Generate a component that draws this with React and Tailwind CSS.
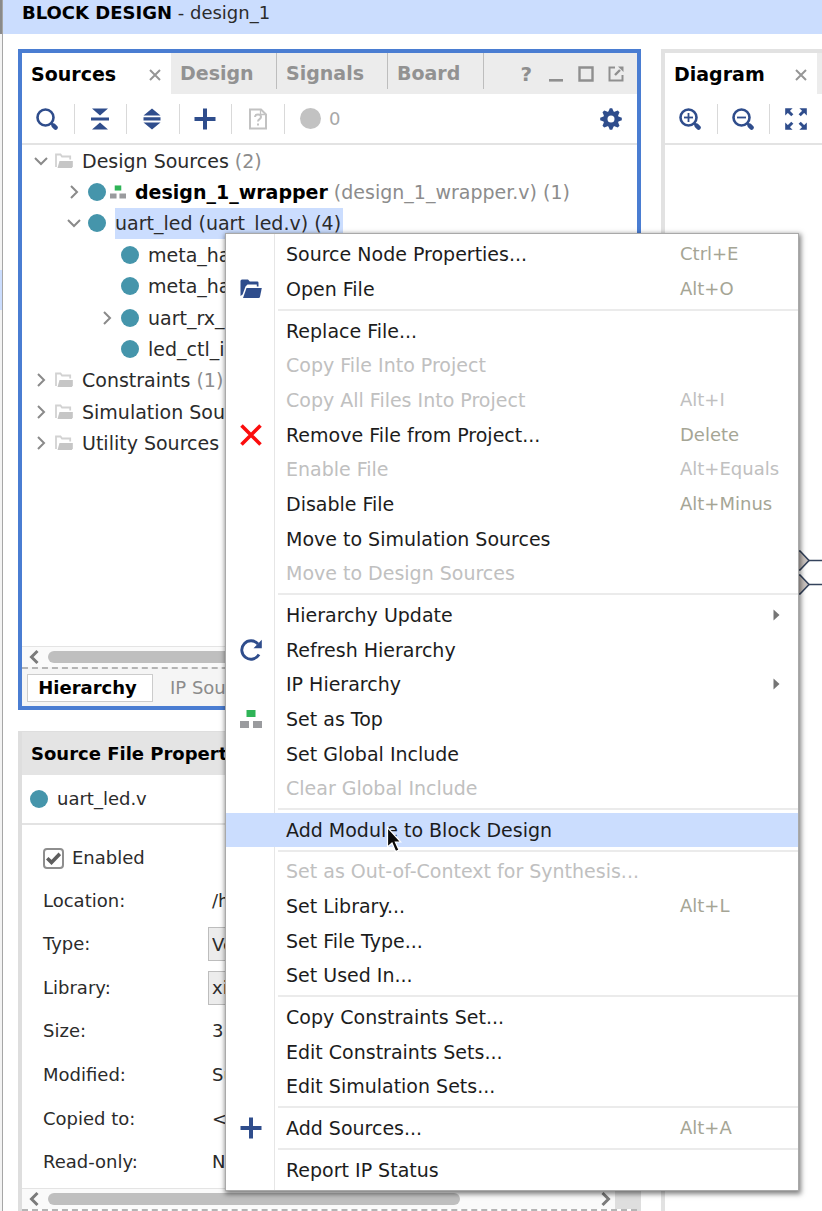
import React from "react";

const NAVY = "#2f4d8c";

/* ---------- icons ---------- */

function Dot() {
  return <span className="size-[18px] shrink-0 rounded-full bg-[#4595ab]" />;
}

function SearchIcon({ sign }) {
  return (
    <svg width="22" height="22" viewBox="0 0 22 22" fill="none" stroke={NAVY} aria-hidden="true">
      <circle cx="9.5" cy="9.5" r="8" strokeWidth="2.6" />
      <path d="M15.5 15.5l2 2" strokeWidth="2.4" />
      <path d="M17.6 17.6l2 2" strokeWidth="4.4" strokeLinecap="round" />
      {sign && <path d="M5 9.5h9" strokeWidth="1.8" />}
      {sign === "plus" && <path d="M9.5 5v9" strokeWidth="1.8" />}
    </svg>
  );
}

function CollapseIcon() {
  return (
    <svg width="20" height="22" viewBox="0 0 20 22" fill={NAVY} aria-hidden="true">
      <path d="M2 0.5h16l-8 7zM2 21.5h16l-8-7zM1 9.5h18v3H1z" />
    </svg>
  );
}

function ExpandIcon() {
  return (
    <svg width="20" height="22" viewBox="0 0 20 22" fill={NAVY} aria-hidden="true">
      <path d="M1.5 7.4L10 0.5l8.5 6.900zM1.5 14.6L10 21.5l8.5-6.900zM1.5 9.200h17v3.200h-17z" />
    </svg>
  );
}

function PlusIcon() {
  return (
    <svg width="22" height="22" viewBox="0 0 22 22" fill={NAVY} aria-hidden="true">
      <path d="M9 0.5h4v21H9zM0.5 9h21v4h-21z" />
    </svg>
  );
}

function HelpPageIcon() {
  return (
    <svg width="20" height="22" viewBox="0 0 20 22" fill="none" stroke="#c2c2c2" strokeWidth="2" aria-hidden="true">
      <path d="M2 1.500h11l5 5v14H2z" />
      <path d="M12.500 1.500v5H18" strokeWidth="1.300" />
      <path d="M7 9c0-3.200 6-3.200 6 0 0 2.200-3 2-3 4.600" />
      <path d="M10 15.600v2" />
    </svg>
  );
}

function GearIcon() {
  return (
    <svg width="22" height="22" viewBox="-11 -11 22 22" aria-hidden="true">
      <g fill={NAVY}>
        {[0, 45, 90, 135].map((a) => (
          <path key={a} d="M-2.600 -7.500 L-1.200 -10.800 H1.200 L2.600 -7.500 V7.500 L1.200 10.800 H-1.200 L-2.600 7.500z" transform={`rotate(${a})`} />
        ))}
        <circle r="7.800" />
      </g>
      <circle r="3.500" fill="#fff" />
    </svg>
  );
}

function FitIcon() {
  return (
    <svg width="22" height="22" viewBox="-11 -11 22 22" aria-hidden="true">
      {[0, 90, 180, 270].map((a) => (
        <g key={a} transform={`rotate(${a})`}>
          <path d="M-10.800 -10.800h7.400l-7.400 7.400z" fill={NAVY} />
          <path d="M-8.500 -8.500l4.800 4.800" stroke={NAVY} strokeWidth="3" />
        </g>
      ))}
    </svg>
  );
}

function CloseIcon() {
  return (
    <svg width="12" height="12" viewBox="0 0 12 12" stroke="#969696" strokeWidth="2" aria-hidden="true">
      <path d="M1 1l10 10M11 1L1 11" />
    </svg>
  );
}

function Chevron({ open }) {
  return (
    <svg width="16" height="16" viewBox="0 0 16 16" fill="none" stroke="#8a8a8a" strokeWidth="2" aria-hidden="true">
      {open ? <path d="M2 5l6 6 6-6" /> : <path d="M5 2l6 6-6 6" />}
    </svg>
  );
}

function GrayFolder() {
  return (
    <svg width="18" height="16" viewBox="0 0 18 16" aria-hidden="true">
      <path d="M1 14V1.500h4.500l1.500 2H15.200V6.500" fill="none" stroke="#d2d2d2" strokeWidth="1.800" />
      <path d="M4.500 8H17.800V13.500L16.800 15H2.500z" fill="#c6c6c6" />
    </svg>
  );
}

function BlueFolder() {
  return (
    <svg width="22" height="20" viewBox="0 0 22 20" aria-hidden="true">
      <path d="M0.500 17V2q0-1.500 1.500-1.500h6L9.800 2.500h7.500q1.200 0 1.200 1.200V7.600H16.800V5.500H7.500L5.500 7.600 2.600 15.500z" fill={NAVY} />
      <path d="M6.500 9H21.800L20 17.800q-.3 1.200-1.400 1.200H3z" fill={NAVY} />
    </svg>
  );
}

function TopIcon({ small }) {
  return (
    <svg width={small ? 16 : 22} height={small ? 14 : 20} viewBox="0 0 22 18" aria-hidden="true">
      <path d="M6.500 0h9v7h-9z" fill="#2fb457" />
      <path d="M0 11h9v7H0zM13 11h9v7h-9z" fill="#9a9b9e" />
    </svg>
  );
}

function RemoveIcon() {
  return (
    <svg width="22" height="22" viewBox="0 0 22 22" stroke="#fb0d0d" strokeWidth="3.600" aria-hidden="true">
      <path d="M1.500 1.500l19 19M20.500 1.500l-19 19" />
    </svg>
  );
}

function RefreshIcon() {
  return (
    <svg width="22" height="22" viewBox="0 0 22 22" aria-hidden="true">
      <path d="M18 5A9.200 9.200 0 1 0 19 15.500" fill="none" stroke={NAVY} strokeWidth="2.900" />
      <path d="M21.800 0.800V9.200H13.500z" fill={NAVY} />
    </svg>
  );
}

/* ---------- source tree ---------- */

const tree = [
  { pad: "pl-[11px]", state: "open", folder: true, label: "Design Sources", count: "(2)" },
  { pad: "pl-[44px]", state: "closed", top: true, bold: true, label: "design_1_wrapper", count: "(design_1_wrapper.v) (1)" },
  { pad: "pl-[44px]", state: "open", selected: true, label: "uart_led (uart_led.v) (4)" },
  { pad: "pl-[77px]", label: "meta_hard0" },
  { pad: "pl-[77px]", label: "meta_hard1" },
  { pad: "pl-[77px]", state: "closed", label: "uart_rx_i0" },
  { pad: "pl-[77px]", label: "led_ctl_i0" },
  { pad: "pl-[11px]", state: "closed", folder: true, label: "Constraints", count: "(1)" },
  { pad: "pl-[11px]", state: "closed", folder: true, label: "Simulation Sources" },
  { pad: "pl-[11px]", state: "closed", folder: true, label: "Utility Sources", count: "(1)" },
];

function TreeRow({ pad, state, folder, top, bold, selected, label, count }) {
  return (
    <li className={`flex items-center whitespace-nowrap ${pad}`}>
      <span className="flex w-4 shrink-0">{state && <Chevron open={state === "open"} />}</span>
      <span className="ml-[6px] flex shrink-0 items-center gap-[4px]">
        {folder ? <GrayFolder /> : <Dot />}
        {top && <TopIcon small />}
      </span>
      <span
        className={`ml-[9px] flex h-full items-center ${selected ? "bg-[#cbddfe] pr-[2px]" : ""} ${
          bold ? "font-bold text-black" : ""
        }`}
      >
        {label}
      </span>
      {count && <span className="ml-[6px] text-[#8c8c8c]">{count}</span>}
    </li>
  );
}

/* ---------- context menu ---------- */

const menu = [
  [
    { label: "Source Node Properties...", keys: "Ctrl+E" },
    { label: "Open File", keys: "Alt+O", icon: <BlueFolder /> },
  ],
  [
    { label: "Replace File..." },
    { label: "Copy File Into Project", off: true },
    { label: "Copy All Files Into Project", keys: "Alt+I", off: true },
    { label: "Remove File from Project...", keys: "Delete", icon: <RemoveIcon /> },
    { label: "Enable File", keys: "Alt+Equals", off: true },
    { label: "Disable File", keys: "Alt+Minus" },
    { label: "Move to Simulation Sources" },
    { label: "Move to Design Sources", off: true },
  ],
  [
    { label: "Hierarchy Update", sub: true },
    { label: "Refresh Hierarchy", icon: <RefreshIcon /> },
    { label: "IP Hierarchy", sub: true },
    { label: "Set as Top", icon: <TopIcon /> },
    { label: "Set Global Include" },
    { label: "Clear Global Include", off: true },
  ],
  [{ label: "Add Module to Block Design", active: true }],
  [
    { label: "Set as Out-of-Context for Synthesis...", off: true },
    { label: "Set Library...", keys: "Alt+L" },
    { label: "Set File Type..." },
    { label: "Set Used In..." },
  ],
  [
    { label: "Copy Constraints Set..." },
    { label: "Edit Constraints Sets..." },
    { label: "Edit Simulation Sets..." },
  ],
  [{ label: "Add Sources...", keys: "Alt+A", icon: <PlusIcon /> }],
  [{ label: "Report IP Status" }],
];

function MenuItem({ label, keys, icon, off, sub, active }) {
  return (
    <button
      type="button"
      role="menuitem"
      disabled={off}
      className={`flex min-h-0 flex-1 items-center text-left whitespace-nowrap ${
        off ? "text-[#c0c0c0]" : "text-[#1c1c1c]"
      } ${active ? "bg-[#cbddfe]" : ""}`}
    >
      <span
        className={`flex w-[49px] shrink-0 items-center justify-center self-stretch border-r pl-[2px] ${
          active ? "border-[#cbddfe]" : "border-[#e6e6e6]"
        }`}
      >
        {icon}
      </span>
      <span className="flex-1 pl-[11px]">{label}</span>
      {keys && <span className={`w-[118px] text-[18px] ${off ? "" : "text-[#a5a595]"}`}>{keys}</span>}
      {sub && (
        <svg width="7" height="12" viewBox="0 0 7 12" className="mr-[18px]" aria-hidden="true">
          <path d="M0.500 0.500v11L6.500 6z" fill="#757575" />
        </svg>
      )}
    </button>
  );
}

function ContextMenu() {
  return (
    <div
      role="menu"
      className="absolute top-[233px] left-[225px] flex h-[958px] w-[574px] flex-col border border-[#a9a9a9] bg-white text-[19px] shadow-[1px_2px_5px_1px_rgba(0,0,0,0.5)]"
    >
      <div className="ml-[48px] h-[3px] border-l border-[#e6e6e6]" />
      {menu.map((group, i) => (
        <React.Fragment key={i}>
          {i > 0 && (
            <div role="separator" className="flex h-[7px] shrink-0 items-center">
              <div className="h-full w-[49px] border-r border-[#e6e6e6]" />
              <div className="ml-[3px] h-[2px] flex-1 bg-[#ebebeb]" />
            </div>
          )}
          {group.map((item) => (
            <MenuItem key={item.label} {...item} />
          ))}
        </React.Fragment>
      ))}
      <div className="ml-[48px] h-[3px] border-l border-[#e6e6e6]" />
      <svg
        width="16"
        height="28"
        viewBox="0 0 16 28"
        className="absolute top-[592px] left-[160px]"
        aria-hidden="true"
      >
        <path
          d="M1.500 1.500V21L6 17l3.600 8.600 3.400-1.500L9.400 16H14.800z"
          fill="#0a0a0a"
          stroke="#fff"
          strokeWidth="1.200"
        />
      </svg>
    </div>
  );
}

/* ---------- shared panel parts ---------- */

function ToolButton({ label, children }) {
  return (
    <div className="flex h-[30px] items-center justify-center border-r border-[#d9d9d9] pr-[1px]">
      <button type="button" aria-label={label}>
        {children}
      </button>
    </div>
  );
}

function ScrollBar({ thumb }) {
  return (
    <div className="flex h-[21px] shrink-0 items-center border-t border-[#e4e4e4] bg-[#fafafa]">
      <svg width="10" height="16" viewBox="0 0 10 16" fill="none" stroke="#7b7b7b" strokeWidth="3" className="ml-[7px]" aria-hidden="true">
        <path d="M8.500 2L2.500 8l6 6" />
      </svg>
      <div className="mx-[9px] flex-1">
        <div className={`h-[12px] rounded-full bg-[#bfbfbf] ${thumb}`} />
      </div>
      <svg width="10" height="16" viewBox="0 0 10 16" fill="none" stroke="#7b7b7b" strokeWidth="3" className="mr-[4px]" aria-hidden="true">
        <path d="M1.500 2l6 6-6 6" />
      </svg>
      <div className="h-full w-[22px] bg-[#dedede]" />
    </div>
  );
}

const idleTabs = [
  { label: "Design", width: "w-[106px]" },
  { label: "Signals", width: "w-[111px]" },
  { label: "Board", width: "w-[96px]" },
];

function SourcesPanel() {
  return (
    <section className="flex min-h-0 flex-1 flex-col border-4 border-[#4a7dd2] bg-white">
      <div className="flex h-[41px] shrink-0 bg-[#ececec] text-[19px] font-bold">
        <div className="flex w-[149px] items-center justify-between bg-white pr-[10px] pl-[9px] text-black">
          <button type="button">Sources</button>
          <button type="button" aria-label="Close Sources" className="pt-[3px]">
            <CloseIcon />
          </button>
        </div>
        {idleTabs.map((t) => (
          <button
            key={t.label}
            type="button"
            className={`mb-[5px] border-r border-[#bdbdbd] pt-[4px] pl-[9px] text-left text-[#929292] ${t.width}`}
          >
            {t.label}
          </button>
        ))}
        <div className="ml-auto flex items-center gap-[14px] pr-[13px] text-[#8f8f8f]">
          <button type="button" aria-label="Help" className="mr-[2px] text-[20px]">
            ?
          </button>
          <button type="button" aria-label="Minimize">
            <svg width="16" height="16" viewBox="0 0 16 16" fill="#8f8f8f" aria-hidden="true">
              <path d="M1 13h14v2.600H1z" />
            </svg>
          </button>
          <button type="button" aria-label="Maximize">
            <svg width="16" height="16" viewBox="0 0 16 16" fill="none" stroke="#8f8f8f" strokeWidth="2.400" aria-hidden="true">
              <path d="M1.500 1.500h13v13h-13z" />
            </svg>
          </button>
          <button type="button" aria-label="Float">
            <svg width="16" height="16" viewBox="0 0 16 16" fill="none" stroke="#8f8f8f" strokeWidth="2" aria-hidden="true">
              <path d="M7 1.500H1.500v13h13V9" />
              <path d="M7 9l5-5" strokeWidth="2.400" />
              <path d="M10 0.500H15.500V6z" fill="#8f8f8f" stroke="none" />
            </svg>
          </button>
        </div>
      </div>

      <div className="flex h-[51px] shrink-0 items-center border-b-2 border-[#e3e3e3]">
        <div className="grid w-[263px] grid-cols-5">
          <ToolButton label="Search"><SearchIcon /></ToolButton>
          <ToolButton label="Collapse All"><CollapseIcon /></ToolButton>
          <ToolButton label="Expand All"><ExpandIcon /></ToolButton>
          <ToolButton label="Add Sources"><PlusIcon /></ToolButton>
          <ToolButton label="Messages"><HelpPageIcon /></ToolButton>
        </div>
        <span className="ml-[15px] size-[21px] rounded-full bg-[#c2c2c2]" />
        <span className="ml-[8px] text-[18px] text-[#a8a8a8]">0</span>
        <button type="button" aria-label="Settings" className="mr-[15px] ml-auto">
          <GearIcon />
        </button>
      </div>

      <ul className="grid h-[314px] shrink-0 auto-rows-fr text-[19px] text-[#2b2b2b]">
        {tree.map((row) => (
          <TreeRow key={row.label} {...row} />
        ))}
      </ul>

      <div className="mt-auto" />
      <ScrollBar thumb="w-[420px]" />
      <div className="flex h-[39px] shrink-0 items-center border-t-2 border-dashed border-[#b5b5b5] bg-[#f5f5f5] pl-[5px] text-[18px]">
        <button type="button" className="h-[28px] w-[126px] border border-[#cccccc] bg-white pr-[5px] font-bold text-black">
          Hierarchy
        </button>
        <button type="button" className="ml-[17px] text-[#8c8c8c]">
          IP Sources
        </button>
      </div>
    </section>
  );
}

const properties = [
  { id: "location", label: "Location:", value: "/home" },
  { id: "type", label: "Type:", value: "Verilog", boxed: true },
  { id: "library", label: "Library:", value: "xil_lib", boxed: true },
  { id: "size", label: "Size:", value: "3.4 KB" },
  { id: "modified", label: "Modified:", value: "Sunday" },
  { id: "copied", label: "Copied to:", value: "<none>" },
  { id: "readonly", label: "Read-only:", value: "No" },
];

function PropertiesPanel() {
  return (
    <section className="mt-[21px] flex shrink-0 flex-col border-t border-r-4 border-l-4 border-[#dedede] bg-white text-[18px] text-[#2b2b2b]">
      <h2 className="flex h-[43px] items-center bg-[#e4e4e4] pl-[9px] font-bold text-black">
        Source File Properties
      </h2>
      <div className="flex h-[50px] items-center gap-[9px] border-b-2 border-[#e3e3e3] pl-[8px]">
        <Dot />
        <span>uart_led.v</span>
      </div>
      <div className="pt-[18px] pb-[4px] pl-[21px]">
        <label className="flex h-[30px] items-center gap-[8px]">
          <span className="grid size-[21px] place-items-center">
            <input
              type="checkbox"
              defaultChecked
              className="col-start-1 row-start-1 size-[21px] appearance-none rounded-[4px] border-2 border-[#8e8e8e] bg-white"
            />
            <svg width="15" height="13" viewBox="0 0 15 13" fill="none" stroke="#5e5e5e" strokeWidth="3.600" className="pointer-events-none col-start-1 row-start-1" aria-hidden="true">
              <path d="M1.200 6.200l4.300 4.200L13.800 1.800" />
            </svg>
          </span>
          Enabled
        </label>
        <div className="mt-[6px] grid h-[305px] auto-rows-fr">
          {properties.map((p) => (
            <div key={p.id} className="flex items-center">
              {p.boxed ? (
                <>
                  <label htmlFor={p.id} className="w-[165px]">{p.label}</label>
                  <input
                    id={p.id}
                    defaultValue={p.value}
                    className="h-[34px] w-[300px] border border-[#bdbdbd] bg-[#ececec] pl-[3px]"
                  />
                </>
              ) : (
                <>
                  <span className="w-[169px]">{p.label}</span>
                  <span>{p.value}</span>
                </>
              )}
            </div>
          ))}
        </div>
      </div>
      <ScrollBar thumb="w-[412px]" />
      <div className="border-t-2 border-dashed border-[#b5b5b5]" />
    </section>
  );
}

function DiagramPanel() {
  return (
    <section className="flex min-w-0 flex-1 flex-col overflow-hidden border-t-4 border-l-4 border-[#e2e2e2] bg-white">
      <div className="flex h-[41px] shrink-0 bg-[#ececec] text-[19px] font-bold">
        <div className="flex w-[152px] items-center justify-between bg-white pr-[10px] pl-[9px] text-black">
          <button type="button">Diagram</button>
          <button type="button" aria-label="Close Diagram" className="pt-[3px]">
            <CloseIcon />
          </button>
        </div>
      </div>
      <div className="flex h-[51px] shrink-0 items-center border-b-2 border-[#e3e3e3]">
        <div className="grid w-[158px] shrink-0 grid-cols-3">
          <ToolButton label="Zoom In"><SearchIcon sign="plus" /></ToolButton>
          <ToolButton label="Zoom Out"><SearchIcon sign="minus" /></ToolButton>
          <ToolButton label="Zoom Fit"><FitIcon /></ToolButton>
        </div>
      </div>
      <div className="relative flex-1">
        <svg width="40" height="50" viewBox="0 0 40 50" className="absolute top-[403px] left-[124px]" aria-hidden="true">
          <g fill="#cbc4c0" stroke="#34435c" strokeWidth="1.600">
            <path d="M0 3h11l9 9.500-9 9.500H0z" />
            <path d="M0 27h11l9 9.500-9 9.500H0z" />
            <path d="M20 12.500h20M20 36.500h20" />
          </g>
        </svg>
      </div>
    </section>
  );
}

export default function App() {
  return (
    <div className="relative flex h-screen overflow-hidden bg-white font-['DejaVu_Sans',sans-serif] leading-[22px]">
      <div className="flex w-[3px] shrink-0 flex-col border-r border-[#a6a6a6] bg-[#f3f3f3]">
        <div className="h-[34px] bg-[#8a8a8a]" />
        <div className="mt-[236px] h-[40px] bg-[#cbddfe]" />
      </div>
      <div className="flex min-w-0 flex-1 flex-col">
        <header className="flex h-[34px] shrink-0 items-center bg-[#cbddfe] pb-[8px] pl-[19px] text-[18px]">
          <h1 className="whitespace-pre text-[#2b2b2b]">
            <b className="text-black">BLOCK DESIGN</b> - design_1
          </h1>
        </header>
        <main className="flex min-h-0 flex-1 gap-[20px] pt-[15px] pl-[15px]">
          <div className="flex w-[623px] shrink-0 flex-col">
            <SourcesPanel />
            <PropertiesPanel />
          </div>
          <DiagramPanel />
        </main>
      </div>
      <ContextMenu />
    </div>
  );
}
